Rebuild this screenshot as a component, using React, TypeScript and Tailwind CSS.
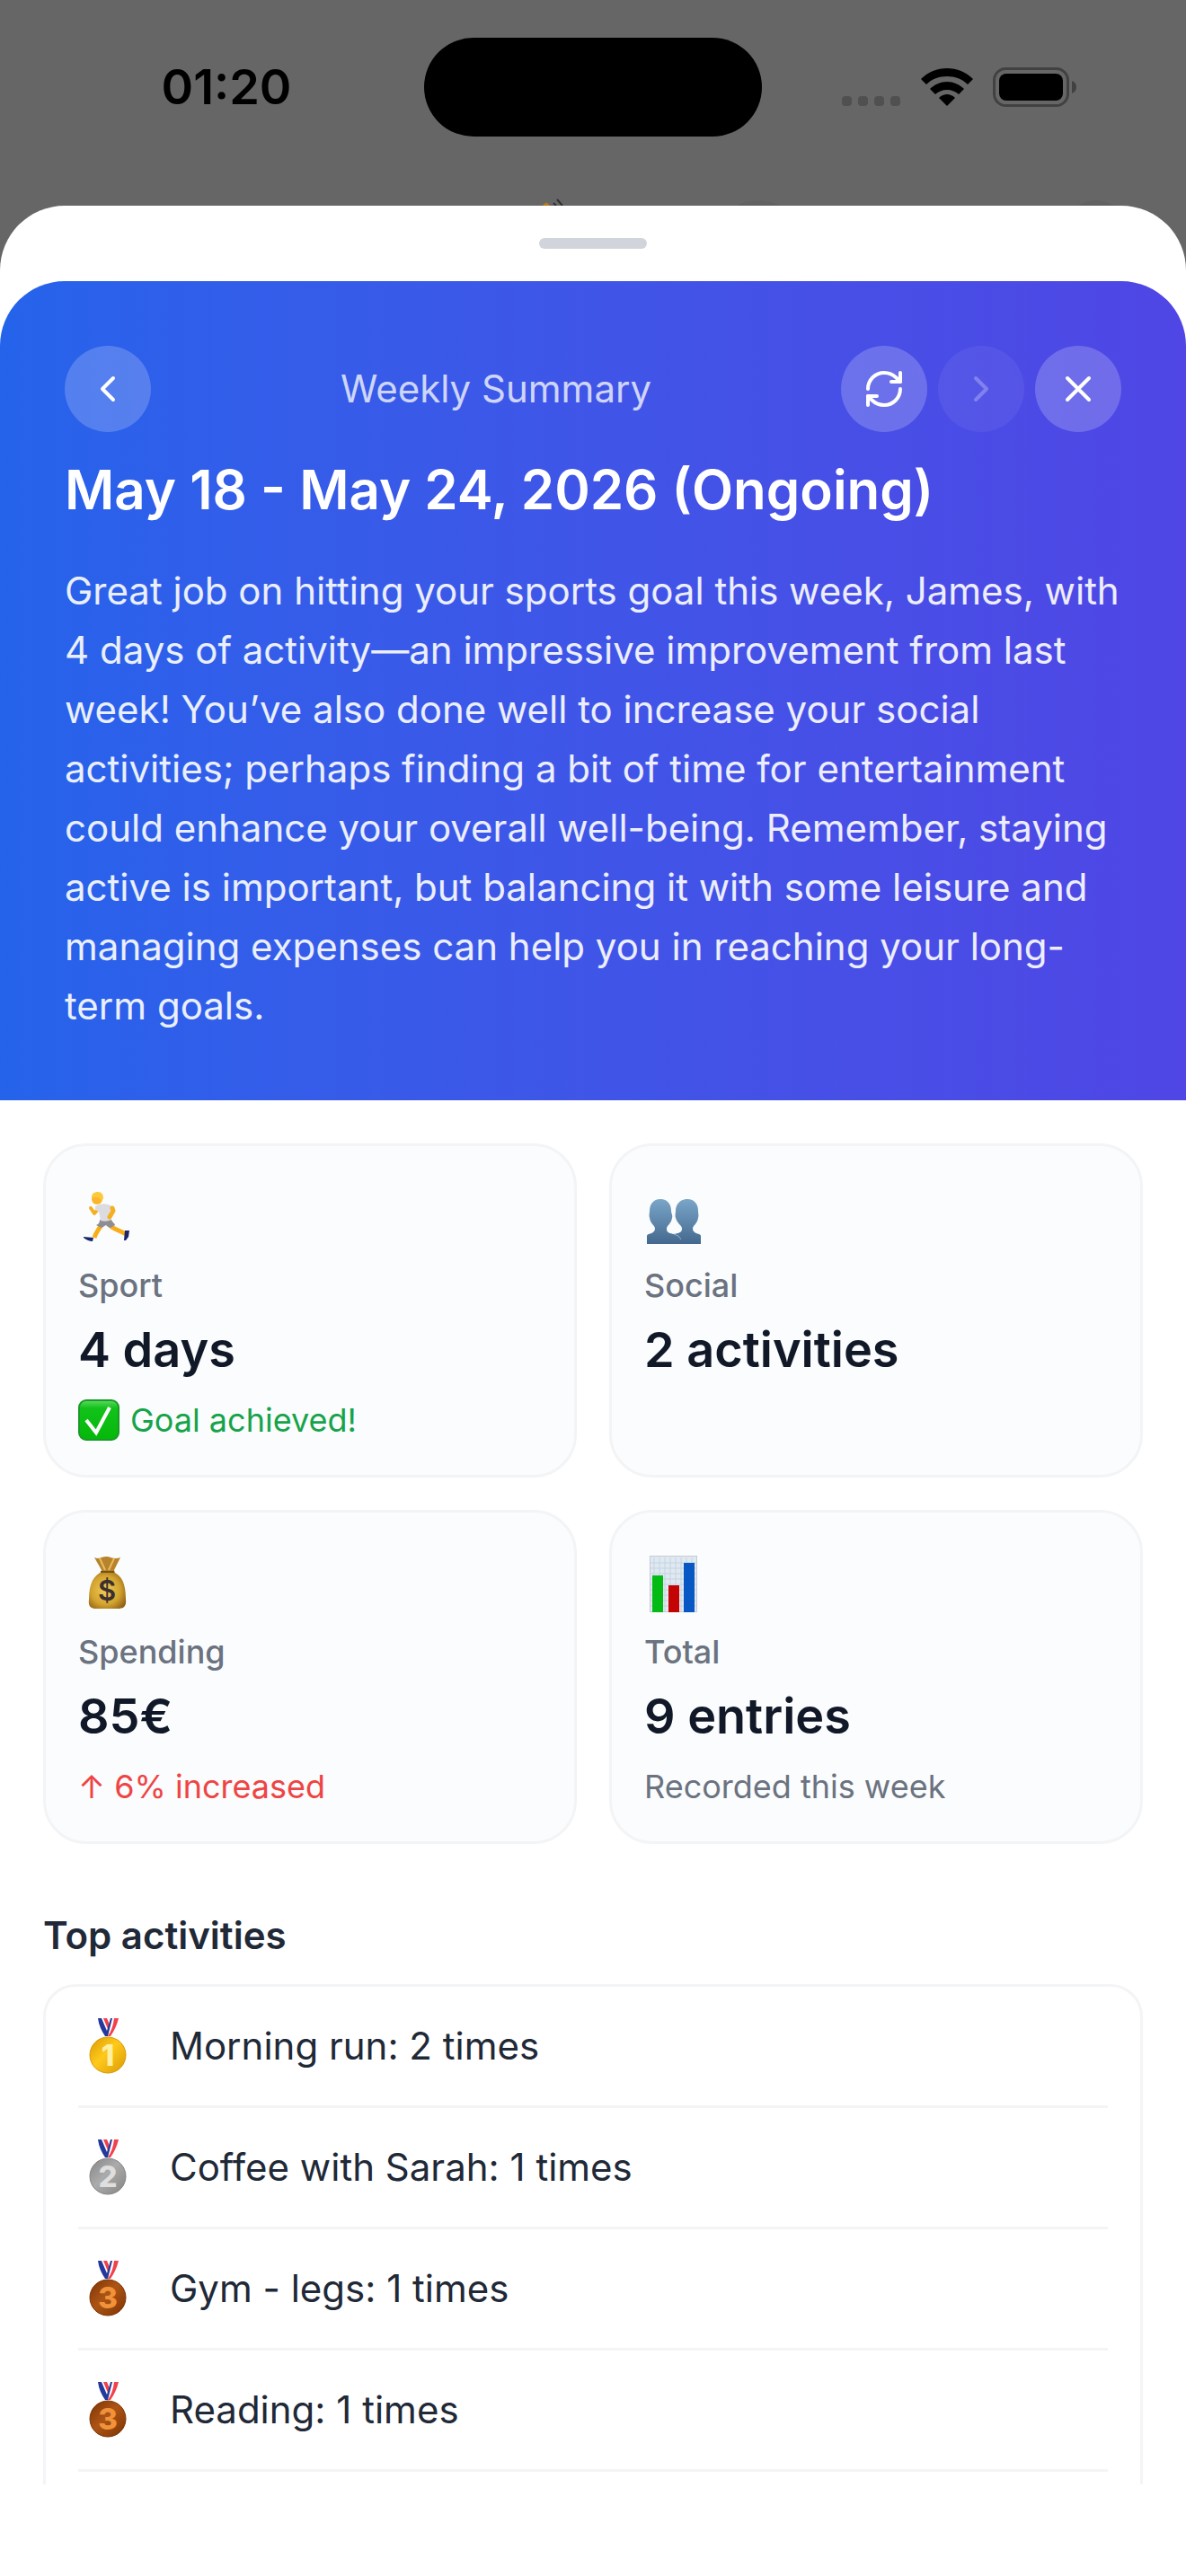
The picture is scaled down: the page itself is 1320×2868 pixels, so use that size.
import { useState } from 'react'
import type { ReactNode } from 'react'

type Tone = 'good' | 'bad' | 'muted'

interface Stat {
  id: string
  icon: ReactNode
  label: string
  value: string
  note?: string
  tone?: Tone
}

interface Activity {
  name: string
  count: number
  place: 1 | 2 | 3
}

const SUMMARY =
  'Great job on hitting your sports goal this week, James, with 4 days of activity—an impressive improvement from last week! You’ve also done well to increase your social activities; perhaps finding a bit of time for entertainment could enhance your overall well-being. Remember, staying active is important, but balancing it with some leisure and managing expenses can help you in reaching your long-term goals.'

const ACTIVITIES: Activity[] = [
  { name: 'Morning run', count: 2, place: 1 },
  { name: 'Coffee with Sarah', count: 1, place: 2 },
  { name: 'Gym - legs', count: 1, place: 3 },
  { name: 'Reading', count: 1, place: 3 },
]

const TONES: Record<Tone, string> = {
  good: 'text-[#16a34a]',
  bad: 'text-[#ef4444]',
  muted: 'text-[#6b7280]',
}

const MEDALS = {
  1: { light: '#ffc91a', dark: '#d99a06', digit: '#fff0a0' },
  2: { light: '#ababab', dark: '#858585', digit: '#dedede' },
  3: { light: '#ad5414', dark: '#7c3405', digit: '#f0923a' },
}

function Runner() {
  return (
    <svg viewBox="0 0 64 64" className="size-16" aria-hidden="true">
      <path d="M24 20 18 27l-4-6" fill="none" stroke="#f5b021" strokeWidth="4" strokeLinecap="round" strokeLinejoin="round" />
      <path d="M26 39c-2 5-6 8-8 15" fill="none" stroke="#f9ae17" strokeWidth="5" />
      <path d="M34 39c5 6 11 6 19 11" fill="none" stroke="#f9ae17" strokeWidth="5" />
      <path d="M24 34h13c1 3 4 4 4 6l-5 3c-3-1-4-2-5-3l-5 3-6-3c3-1 4-3 4-6Z" fill="#8d8d92" />
      <path d="M19 19q7-4 14-2 5 1 6 4l-4 4 2 9q-6 3-12 1l-2-10-4-2Z" fill="#dcdce0" />
      <path d="M38 21l1 3-4 7" fill="none" stroke="#f5b021" strokeWidth="5" strokeLinecap="round" strokeLinejoin="round" />
      <circle cx="21" cy="11" r="6" fill="#fbb52c" />
      <path d="M15 9c0-4 3-6 7-6s6 3 6 7l-2 4c-1-3-2-4-4-5Z" fill="#fcca38" />
      <path d="M6 53l11 1-1 4q-5 0-10-4Z" fill="#19246b" />
      <path d="M52 46l5 0-1 7-3 4h-2Z" fill="#19246b" />
    </svg>
  )
}

function People() {
  return (
    <svg viewBox="0 0 64 64" className="size-16" aria-hidden="true">
      <defs>
        <linearGradient id="people" x1="0" y1="0" x2="0" y2="1">
          <stop offset="0" stopColor="#7aa6c8" />
          <stop offset="1" stopColor="#44688f" />
        </linearGradient>
      </defs>
      <path
        fill="url(#people)"
        d="M18 11c8 0 12 6 12 13 0 3 2 5 1 8-1 7-6 8-6 12 0 5 4 5 8 6 4-1 9-1 9-6 0-4-5-5-7-12-1-3 0-5 0-8 0-7 5-13 13-13s12 6 12 13c0 3 1 5 0 8-1 7-6 8-6 12 0 6 9 5 9 8v9H3v-9c0-3 9-2 9-8 0-4-5-5-6-12-1-3 0-5 0-8 0-7 4-13 12-13Z"
      />
      <path d="M33 50q6 1 8 6" fill="none" stroke="#8db1cd" strokeWidth="1" />
    </svg>
  )
}

function MoneyBag() {
  return (
    <svg viewBox="0 0 64 64" className="size-16" aria-hidden="true">
      <defs>
        <radialGradient id="bag" cx="0.45" cy="0.5" r="0.65">
          <stop offset="0" stopColor="#f0cd55" />
          <stop offset="0.6" stopColor="#d3a32f" />
          <stop offset="1" stopColor="#8e5f14" />
        </radialGradient>
      </defs>
      <path d="M18 2q4 2 8 0 6-2 10 0 6 2 11 0l-7 14 1 3H25l1-3Z" fill="#b8832a" />
      <path d="M24 3l6 13M40 3l-6 13" stroke="#e5bd62" strokeWidth="2" />
      <path d="M26 18h13c10 5 14 13 14 31 1 8-3 10-9 10H20c-6 0-9-3-8-10 0-18 5-26 14-31Z" fill="url(#bag)" />
      <path d="M25 18h15" stroke="#755019" strokeWidth="2" />
      <text x="32" y="50" textAnchor="middle" fontSize="31" fontWeight="600" fontFamily="Inter, sans-serif" fill="#3c2f2f">
        $
      </text>
    </svg>
  )
}

function Chart() {
  return (
    <svg viewBox="0 0 64 64" className="size-16" aria-hidden="true">
      <rect x="6" y="0" width="53" height="63" fill="#dfe9f2" />
      <path
        d="M11 2v60M17 2v60M23 2v60M29 2v60M35 2v60M41 2v60M47 2v60M53 2v60M6 8h53M6 14h53M6 20h53M6 26h53M6 32h53M6 38h53M6 44h53M6 50h53M6 56h53"
        stroke="#c6d3df"
        strokeWidth="1"
      />
      <rect x="6.5" y="0.5" width="52" height="62" fill="none" stroke="#c9c9d4" />
      <rect x="9" y="22" width="12" height="41" fill="#04bb16" />
      <rect x="27" y="33" width="12" height="30" fill="#c40404" />
      <rect x="44" y="8" width="12" height="55" fill="#0757c4" />
    </svg>
  )
}

function CheckBadge() {
  return (
    <svg viewBox="0 0 46 46" className="size-[46px]" aria-hidden="true">
      <defs>
        <linearGradient id="check" x1="0" y1="0" x2="0" y2="1">
          <stop offset="0" stopColor="#5fd964" />
          <stop offset="0.2" stopColor="#12c21a" />
          <stop offset="1" stopColor="#04b808" />
        </linearGradient>
      </defs>
      <rect x="1" y="1" width="44" height="44" rx="8" fill="url(#check)" stroke="#1a9a28" strokeWidth="2" />
      <path d="M9 23l11 14L35 9" fill="none" stroke="#fff" strokeWidth="4" />
    </svg>
  )
}

function Medal({ place }: { place: 1 | 2 | 3 }) {
  const { light, dark, digit } = MEDALS[place]
  return (
    <svg viewBox="0 0 42 62" className="h-[62px] w-[42px]" aria-hidden="true">
      <defs>
        <linearGradient id={`medal-${place}`} x1="0" y1="0" x2="1" y2="1">
          <stop offset="0" stopColor={dark} />
          <stop offset="0.45" stopColor={light} />
          <stop offset="1" stopColor={dark} />
        </linearGradient>
      </defs>
      <path d="M16 0h4l3 7-2 5Z" fill="#f2414b" />
      <path d="M28 0h5c-2 8-5 14-9 20h-3c4-6 6-12 7-20Z" fill="#f2414b" />
      <path d="M10 0h4l6 14 4-14h2l-5 20h-3C14 14 11 8 10 0Z" fill="#24399b" />
      <circle cx="21" cy="41" r="20" fill={`url(#medal-${place})`} stroke={dark} strokeWidth="1" />
      <text x="21" y="53" textAnchor="middle" fontSize="33" fontWeight="800" fontFamily="Inter, sans-serif" fill={digit}>
        {place}
      </text>
    </svg>
  )
}

const STATS: Stat[] = [
  { id: 'sport', icon: <Runner />, label: 'Sport', value: '4 days', note: 'Goal achieved!', tone: 'good' },
  { id: 'social', icon: <People />, label: 'Social', value: '2 activities' },
  { id: 'spending', icon: <MoneyBag />, label: 'Spending', value: '85€', note: '↑ 6% increased', tone: 'bad' },
  { id: 'total', icon: <Chart />, label: 'Total', value: '9 entries', note: 'Recorded this week', tone: 'muted' },
]

function StatusBar() {
  return (
    <div className="grid grid-cols-[1fr_auto_1fr] items-center pt-[42px]">
      <div className="pl-8 text-center text-[54px] leading-[60px] font-semibold text-black">01:20</div>
      <div className="h-[110px] w-[376px] rounded-full bg-black" />
      <div className="flex items-center justify-center gap-[22px] pr-8">
        <svg viewBox="0 0 66 42" className="h-[42px] w-[66px]" fill="#505050" aria-hidden="true">
          <rect x="0" y="31" width="11" height="11" rx="4" />
          <rect x="18" y="31" width="11" height="11" rx="4" />
          <rect x="36" y="31" width="11" height="11" rx="4" />
          <rect x="54" y="31" width="11" height="11" rx="4" />
        </svg>
        <svg viewBox="0 0 58 42" className="h-[42px] w-[58px]" aria-hidden="true">
          <path d="M29 0c11 0 21 4 29 12l-6 6C46 12 38 9 29 9S12 12 6 18l-6-6C8 4 18 0 29 0Z" />
          <path d="M29 15c7 0 14 3 19 8l-6 6c-3-3-8-5-13-5s-10 2-13 5l-6-6c5-5 12-8 19-8Z" />
          <path d="M29 29c3 0 6 1 9 4l-9 9-9-9c3-3 6-4 9-4Z" />
        </svg>
        <svg viewBox="0 0 94 44" className="h-[44px] w-[94px]" aria-hidden="true">
          <rect x="1.5" y="1.5" width="82" height="41" rx="13" fill="none" stroke="#414141" strokeWidth="3" />
          <rect x="7" y="7" width="71" height="30" rx="8" />
          <path d="M88 15q5 2 5 7t-5 7Z" fill="#414141" />
        </svg>
      </div>
    </div>
  )
}

interface RoundButtonProps {
  label: string
  disabled?: boolean
  onClick?: () => void
  children: ReactNode
}

function RoundButton({ label, disabled, onClick, children }: RoundButtonProps) {
  return (
    <button
      type="button"
      aria-label={label}
      disabled={disabled}
      onClick={onClick}
      className="flex size-24 items-center justify-center rounded-full bg-white/20 text-white disabled:opacity-30"
    >
      <svg
        viewBox="0 0 24 24"
        className="size-12"
        fill="none"
        stroke="currentColor"
        strokeWidth="2"
        strokeLinecap="round"
        strokeLinejoin="round"
        aria-hidden="true"
      >
        {children}
      </svg>
    </button>
  )
}

function StatCard({ stat }: { stat: Stat }) {
  return (
    <div className="flex min-h-[372px] flex-col rounded-[48px] border-3 border-[#f3f4f6] bg-[#fafcfd] px-9 pt-12 pb-6">
      <div className="h-16">{stat.icon}</div>
      <div className="mt-[19px] text-[36px] leading-[48px] font-medium text-[#6b7280]">{stat.label}</div>
      <div className="mt-3 text-[54px] leading-[72px] font-semibold text-[#111827]">{stat.value}</div>
      {stat.note && (
        <div className={`mt-[18px] flex items-center gap-3 text-[36px] leading-[48px] ${TONES[stat.tone ?? 'muted']}`}>
          {stat.tone === 'good' && <CheckBadge />}
          {stat.note}
        </div>
      )}
    </div>
  )
}

function App() {
  const [open, setOpen] = useState(true)

  return (
    <div className="flex h-screen flex-col bg-[#666666] font-[Inter,sans-serif]">
      <StatusBar />

      {/* Screen header behind the sheet, only its top edge shows */}
      <div className="flex h-[77px] shrink-0 items-end justify-end pr-20">
        <svg viewBox="0 0 640 8" className="h-2 w-[640px]" aria-hidden="true">
          <path d="M4 8q4-7 8 0Z" fill="#b87a1c" />
          <path d="M16 5l3 3M20 1l6 7" stroke="#2f2f2f" strokeWidth="2" />
          <path d="M220 8q24-12 48 0ZM600 8q20-12 40 0Z" fill="#616161" />
        </svg>
      </div>

      {open && (
        <main className="flex min-h-0 flex-1 flex-col overflow-hidden rounded-t-[72px] bg-white">
          <div className="flex shrink-0 justify-center py-9">
            <div className="h-3 w-[120px] rounded-full bg-[#d1d5db]" />
          </div>

          <header className="shrink-0 rounded-t-[72px] bg-linear-to-r from-[#2563eb] to-[#4f46e5] p-[72px]">
            <div className="flex items-center justify-between">
              <RoundButton label="Previous week">
                <path d="m15 18-6-6 6-6" />
              </RoundButton>
              <span className="text-[42px] leading-[60px] text-white/75">Weekly Summary</span>
              <div className="flex gap-3">
                <RoundButton label="Refresh">
                  <path d="M3 12a9 9 0 0 1 9-9 9.75 9.75 0 0 1 6.74 2.74L21 8" />
                  <path d="M21 3v5h-5" />
                  <path d="M21 12a9 9 0 0 1-9 9 9.75 9.75 0 0 1-6.74-2.74L3 16" />
                  <path d="M8 16H3v5" />
                </RoundButton>
                <RoundButton label="Next week" disabled>
                  <path d="m9 18 6-6-6-6" />
                </RoundButton>
                <RoundButton label="Close" onClick={() => setOpen(false)}>
                  <path d="M18 6 6 18M6 6l12 12" />
                </RoundButton>
              </div>
            </div>
            <h1 className="mt-6 text-[60px] leading-[80px] font-semibold text-white">May 18 - May 24, 2026 (Ongoing)</h1>
            <p className="mt-10 text-[42px] leading-[66px] text-white/90">{SUMMARY}</p>
          </header>

          <div className="min-h-0 flex-1 overflow-hidden px-12 pt-12">
            <section className="grid grid-cols-2 gap-9">
              {STATS.map(stat => (
                <StatCard key={stat.id} stat={stat} />
              ))}
            </section>

            <h2 className="mt-[72px] text-[42px] leading-[60px] font-semibold text-[#1f2937]">Top activities</h2>
            <ul className="mt-6 rounded-[36px] border-3 border-[#f3f4f6] px-9 pb-[72px]">
              {ACTIVITIES.map(({ name, count, place }) => (
                <li key={name} className="flex h-[135px] items-center border-b-3 border-[#f3f4f6]">
                  <div className="flex w-[102px] pl-3">
                    <Medal place={place} />
                  </div>
                  <span className="text-[42px] leading-[60px] text-[#1f2937]">
                    {name}: {count} times
                  </span>
                </li>
              ))}
            </ul>
          </div>
          <div className="h-[102px] shrink-0" />
        </main>
      )}
    </div>
  )
}

export default App
